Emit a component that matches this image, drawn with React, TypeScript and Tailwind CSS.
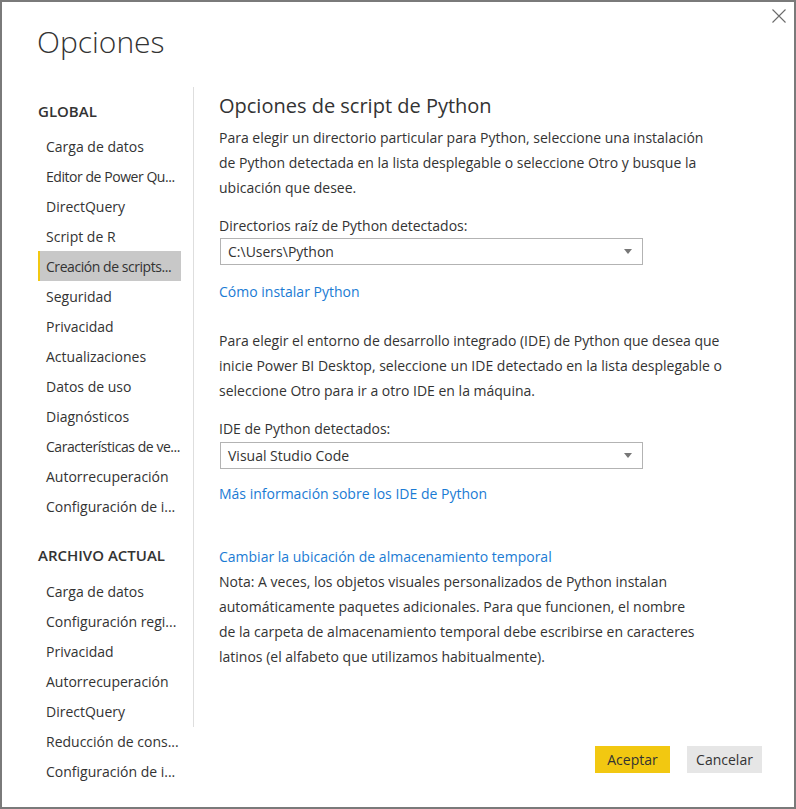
import React from "react";

const globalItems = [
  "Carga de datos",
  "Editor de Power Qu...",
  "DirectQuery",
  "Script de R",
  "Creación de scripts...",
  "Seguridad",
  "Privacidad",
  "Actualizaciones",
  "Datos de uso",
  "Diagnósticos",
  "Características de ve...",
  "Autorrecuperación",
  "Configuración de i...",
];

const fileItems = [
  "Carga de datos",
  "Configuración regi...",
  "Privacidad",
  "Autorrecuperación",
  "DirectQuery",
  "Reducción de cons...",
  "Configuración de i...",
];

const tight = new Set(["Editor de Power Qu...", "Características de ve...", "Creación de scripts..."]);

function NavItem({ label, selected }: { label: string; selected?: boolean }) {
  const base = selected
    ? "h-[30px] w-[143px] flex items-center pl-[6px] border-l-2 border-[#f2c811] bg-[#c8c8c8] whitespace-nowrap"
    : "h-[30px] w-[143px] flex items-center pl-[8px] whitespace-nowrap";
  return (
    <div className={base}>
      <span className={tight.has(label) ? "tracking-[-0.45px]" : ""}>{label}</span>
    </div>
  );
}

function Select({ value }: { value: string }) {
  return (
    <div className="ml-px w-[423px] h-[27px] border border-[#b3b3b3] flex items-center justify-between pl-[7px] pr-[10px] bg-white">
      <span>{value}</span>
      <svg width="8" height="5" viewBox="0 0 8 5">
        <path d="M0 0 L8 0 L4 5 Z" fill="#777" />
      </svg>
    </div>
  );
}

export default function App() {
  return (
    <div
      className="relative w-[796px] h-[809px] bg-white border-2 border-[#7a7a7a] text-[14px] text-[#333]"
      style={{ fontFamily: '"Open Sans", "Noto Sans", sans-serif' }}
    >
      <div className="absolute left-[770px] top-[7px]">
        <svg width="14" height="14" viewBox="0 0 14 14">
          <path d="M0.5 0.5 L13.5 13.5 M13.5 0.5 L0.5 13.5" stroke="#6b6b6b" strokeWidth="1.1" />
        </svg>
      </div>

      <div className="pl-[35px] pt-[20px] h-[85px]">
        <div className="text-[30px] leading-[40px] font-light text-[#333]">Opciones</div>
      </div>

      <div className="flex items-start">
        <div className="w-[155px] ml-[36px] flex flex-col">
          <div className="mt-[9px] h-[30px] leading-[30px] text-[15px] font-semibold text-[#333]">GLOBAL</div>
          <div className="mt-[5px] flex flex-col">
            {globalItems.map((it) => (
              <NavItem key={it} label={it} selected={it === "Creación de scripts..."} />
            ))}
          </div>
          <div className="mt-[19px] h-[30px] leading-[30px] text-[15px] font-semibold text-[#333]">ARCHIVO ACTUAL</div>
          <div className="mt-[6px] flex flex-col">
            {fileItems.map((it, i) => (
              <NavItem key={it + i} label={it} />
            ))}
          </div>
        </div>

        <div className="w-px h-[640px] bg-[#dedede]" />

        <div className="flex-1 h-[686px] flex flex-col pl-[25px]">
          <div className="mt-[5px] text-[20px] leading-[28px] text-[#333]">Opciones de script de Python</div>
          <div className="mt-[5px] leading-[25px]">
            Para elegir un directorio particular para Python, seleccione una instalación
            <br />
            de Python detectada en la lista desplegable o seleccione Otro y busque la
            <br />
            ubicación que desee.
          </div>
          <div className="mt-[16px] leading-[20px]">Directorios raíz de Python detectados:</div>
          <div className="mt-[2px]">
            <Select value="C:\Users\Python" />
          </div>
          <div className="mt-[17px] leading-[20px] text-[#1a7bd4]">Cómo instalar Python</div>
          <div className="mt-[26px] leading-[25px]">
            Para elegir el entorno de desarrollo integrado (IDE) de Python que desea que
            <br />
            inicie Power BI Desktop, seleccione un IDE detectado en la lista desplegable o
            <br />
            seleccione Otro para ir a otro IDE en la máquina.
          </div>
          <div className="mt-[16px] leading-[20px]">IDE de Python detectados:</div>
          <div className="mt-[3px]">
            <Select value="Visual Studio Code" />
          </div>
          <div className="mt-[15px] leading-[20px] text-[#1a7bd4]">Más información sobre los IDE de Python</div>
          <div className="mt-[43px] leading-[20px] text-[#1a7bd4]">Cambiar la ubicación de almacenamiento temporal</div>
          <div className="mt-[2px] leading-[25px]">
            Nota: A veces, los objetos visuales personalizados de Python instalan
            <br />
            automáticamente paquetes adicionales. Para que funcionen, el nombre
            <br />
            de la carpeta de almacenamiento temporal debe escribirse en caracteres
            <br />
            latinos (el alfabeto que utilizamos habitualmente).
          </div>
          <div className="mt-auto flex justify-end gap-[17px] pr-[32px]">
            <div className="w-[75px] h-[27px] bg-[#f2c811] flex items-center justify-center text-[14px] text-[#333]">
              Aceptar
            </div>
            <div className="w-[75px] h-[27px] bg-[#e6e6e6] flex items-center justify-center text-[14px] text-[#333]">
              Cancelar
            </div>
          </div>
        </div>
      </div>
    </div>
  );
}
